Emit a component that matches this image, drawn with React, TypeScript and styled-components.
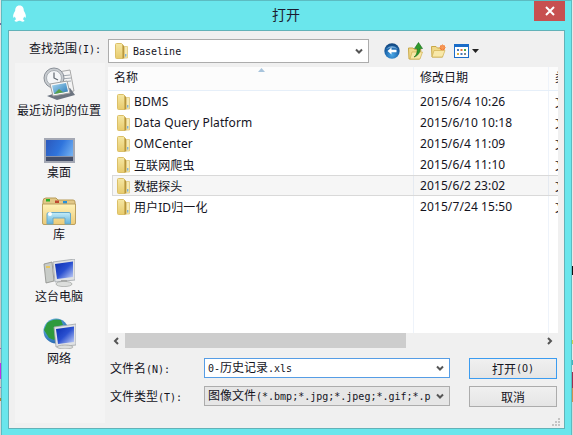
import React from 'react';
import styled, { createGlobalStyle } from 'styled-components';

const GlobalStyle = createGlobalStyle`
  html, body {
    margin: 0;
    width: 573px;
    height: 435px;
    overflow: hidden;
    background: #6ae6ec;
  }
  * { box-sizing: border-box; }
`;

const UI_FONT = `"Noto Sans", "Noto Sans CJK SC", sans-serif`;
const CJK_FONT = `"Noto Sans CJK SC", sans-serif`;

const Page = styled.div`
  display: flex;
  width: 573px;
  height: 435px;
  font-family: ${CJK_FONT};
  font-size: 12px;
  color: #14141e;
`;

const LeftEdge = styled.div`
  width: 1px;
  background: linear-gradient(
    #e4e4e4 0 23px, #7a6aa0 23px 25px, #e4e4e4 25px 110px, #c8c8c8 110px 348px,
    #b050c0 348px 349px, #c8c8c8 349px 363px, #c030e8 363px 379px, #c8c8c8 379px 387px,
    #a060c0 387px 388px, #c8c8c8 388px 398px, #b08030 398px 401px, #d8d8d8 401px
  );
`;

const RightEdge = styled.div`
  width: 1px;
  background: linear-gradient(
    #e8e8e8 0 266px, #101010 266px 275px, #e8e8e8 275px 340px, #c8d850 340px 344px,
    #e8e8e8 344px 360px, #40b8c0 360px 365px, #e8e8e8 365px 372px, #a03050 372px 388px,
    #d09050 388px 402px, #d8d8d8 402px
  );
`;

const Window = styled.div`
  position: relative;
  width: 571px;
  display: flex;
  flex-direction: column;
  padding: 0 6px 6px;
  background: #6ae6ec;
  border: 1px solid #5cbcc2;
  border-bottom: none;
`;

const TitleBar = styled.div`
  height: 29px;
  display: flex;
  align-items: center;
  justify-content: center;
  padding: 0 1px 4px 0;
  font-size: 14px;
  color: #1c1c30;
`;

const AppIcon = styled.svg`
  position: absolute;
  left: 10px;
  top: 4px;
`;

const CloseButton = styled.div`
  position: absolute;
  right: 6px;
  top: 0;
  width: 31px;
  height: 20px;
  display: flex;
  align-items: center;
  justify-content: center;
  background: #c75050;
`;

const Body = styled.div`
  position: relative;
  height: 399px;
  display: flex;
  flex-direction: column;
  background: #f0f0f0;
  border: 1px solid #62b2b8;
`;

const LookInRow = styled.div`
  display: flex;
  align-items: flex-start;
  height: 32px;
  padding: 8px 0 0 20px;
`;

const LookInLabel = styled.div`
  width: 79px;
  height: 20px;
  line-height: 17px;
  white-space: nowrap;
`;

const Latin = styled.span`
  font-family: "DejaVu Sans Mono", monospace;
  font-size: 10px;
`;

const Combo = styled.div<{ $width: number; $height: number; $filled?: boolean; $focus?: boolean }>`
  width: ${({ $width }) => $width}px;
  height: ${({ $height }) => $height}px;
  display: flex;
  align-items: center;
  flex: none;
  gap: 5px;
  padding: 0 5px 0 ${({ $filled, $focus }) => ($filled || $focus ? 3 : 6)}px;
  background: ${({ $filled }) => ($filled ? '#e6e6e6' : '#fff')};
  border: 1px solid ${({ $focus }) => ($focus ? '#569de5' : '#acacac')};
  white-space: nowrap;
  overflow: hidden;
`;

const ComboText = styled.span`
  flex: 1;
  overflow: hidden;
  line-height: 18px;
`;

const Toolbar = styled.div`
  display: flex;
  align-items: center;
  height: 23px;
  margin-left: 15px;
`;

const ToolIcon = styled.svg<{ $gap?: number }>`
  display: block;
  flex: none;
  margin-right: ${({ $gap }) => $gap ?? 0}px;
`;

const Split = styled.div`
  display: flex;
  height: 360px;
  padding-left: 6px;
`;

const Sidebar = styled.div`
  width: 90px;
  display: flex;
  flex-direction: column;
  padding: 3px 2px 0 0;
  background: #f4f4f4;
`;

const Place = styled.div`
  height: 62px;
  display: flex;
  flex-direction: column;
  align-items: center;
`;

const PlaceIcon = styled.div`
  height: 37px;
  display: flex;
  align-items: flex-end;
  justify-content: center;
  padding-bottom: 2px;
`;

const PlaceLabel = styled.div`
  height: 14px;
  line-height: 14px;
  white-space: nowrap;
`;

const MainColumn = styled.div`
  width: 450px;
  margin-left: 3px;
  padding-top: 4px;
  display: flex;
  flex-direction: column;
`;

const ListHeader = styled.div`
  position: relative;
  display: flex;
  height: 24px;
  background: #fcfcfc;
  border-bottom: 1px solid #e6eff9;
  font-family: ${UI_FONT};
  overflow: hidden;
`;

const HeaderCell = styled.div<{ $width: number }>`
  flex: none;
  width: ${({ $width }) => $width}px;
  padding-left: 6px;
  line-height: 22px;
  border-right: 1px solid #eef3fa;
  white-space: nowrap;
  overflow: hidden;
`;

const SortArrow = styled.svg`
  position: absolute;
  left: 150px;
  top: 1px;
`;

const ListBody = styled.div`
  height: 242px;
  background-color: #fff;
  background-image: linear-gradient(#eef3fa, #eef3fa), linear-gradient(#eef3fa, #eef3fa);
  background-repeat: no-repeat;
  background-size: 1px 100%;
  background-position: 305px 0, 440px 0;
  font-family: ${UI_FONT};
  letter-spacing: 0.1px;
`;

const Row = styled.div<{ $selected?: boolean }>`
  display: flex;
  align-items: center;
  height: 21px;
  margin-left: 4px;
  background: ${({ $selected }) => ($selected ? 'rgba(0, 0, 0, 0.035)' : 'transparent')};
  border: 1px solid ${({ $selected }) => ($selected ? '#d9d9d9' : 'transparent')};
  border-right: none;
`;

const NameCell = styled.div`
  width: 300px;
  display: flex;
  align-items: center;
  gap: 4px;
  padding-left: 4px;
  white-space: nowrap;
`;

const DateCell = styled.div`
  width: 135px;
  padding-left: 7px;
  white-space: nowrap;
`;

const TypeCell = styled.div`
  flex: 1;
  min-width: 0;
  padding-left: 7px;
  white-space: nowrap;
  overflow: hidden;
`;

const ScrollBar = styled.div`
  height: 15px;
  display: flex;
  align-items: center;
  background: #f0f0f0;
`;

const ScrollButton = styled.div`
  width: 17px;
  height: 15px;
  display: flex;
  align-items: center;
  justify-content: center;
`;

const ScrollThumb = styled.div`
  width: 281px;
  height: 15px;
  background: #cdcdcd;
`;

const ScrollTrack = styled.div`
  flex: 1;
`;

const Form = styled.div`
  display: flex;
  flex-direction: column;
  gap: 8px;
  padding-top: 10px;
`;

const FormRow = styled.div`
  display: flex;
  align-items: flex-start;
  height: 20px;
`;

const FormLabel = styled.div`
  width: 96px;
  padding-left: 2px;
  line-height: 20px;
  white-space: nowrap;
`;

const DialogButton = styled.div<{ $primary?: boolean }>`
  width: 88px;
  height: 21px;
  margin-left: 19px;
  flex: none;
  display: flex;
  align-items: center;
  justify-content: center;
  background: linear-gradient(#f0f0f0, #e5e5e5);
  border: 1px solid ${({ $primary }) => ($primary ? '#3c9cf0' : '#acacac')};
`;

const Grip = styled.svg`
  position: absolute;
  right: 3px;
  bottom: 1px;
`;

const Chevron = ({ dir = 'down' }: { dir?: 'down' | 'left' | 'right' }) => {
  const d =
    dir === 'down' ? 'M1 1.5 L4 4.5 L7 1.5' : dir === 'left' ? 'M5 1 L2 4 L5 7' : 'M2 1 L5 4 L2 7';
  const box = dir === 'down' ? [8, 6] : [7, 8];
  return (
    <ToolIcon width={box[0]} height={box[1]} viewBox={`0 0 ${box[0]} ${box[1]}`}>
      <path d={d} fill="none" stroke="#555" strokeWidth="2" />
    </ToolIcon>
  );
};

const Folder = () => (
  <ToolIcon width="13" height="16" viewBox="0 0 13 16">
    <defs>
      <linearGradient id="fold" x1="0" y1="0" x2="0" y2="1">
        <stop offset="0" stopColor="#f5e7a4" />
        <stop offset="1" stopColor="#e8cb6c" />
      </linearGradient>
    </defs>
    <path d="M0.5 1.5 Q0.5 0.5 1.5 0.5 H6.5 L8 2 V15.5 H1.5 Q0.5 15.5 0.5 14.5 Z" fill="url(#fold)" stroke="#dcc068" />
    <path d="M7.5 1.5 L9.5 3.5 V15.5 H7.5 Z" fill="#b8963c" />
    <path d="M9.5 3.5 H12.5 V15 H9.5 Z" fill="#f6eab4" stroke="#e0c878" strokeWidth="0.8" />
    <rect x="10" y="11" width="1.4" height="2.6" fill="#7fb2d8" />
  </ToolIcon>
);

const QQIcon = () => (
  <AppIcon width="15" height="18" viewBox="0 0 16 19">
    <path
      d="M8 0.5 C11.6 0.5 12.6 3.4 12.6 6 C13.8 8 15.4 10.8 14.6 13.2 C14 13.8 13.4 13 12.9 12.2 C12.7 13.4 12.2 14.4 11.6 15.1 C13 15.7 13.6 16.5 13 17.2 C12 18 9.6 17.8 8.6 16.8 H7.4 C6.4 17.8 4 18 3 17.2 C2.4 16.5 3 15.7 4.4 15.1 C3.8 14.4 3.3 13.4 3.1 12.2 C2.6 13 2 13.8 1.4 13.2 C0.6 10.8 2.2 8 3.4 6 C3.4 3.4 4.4 0.5 8 0.5 Z"
      fill="#fff"
    />
  </AppIcon>
);

const BackIcon = () => (
  <ToolIcon $gap={8} width="16" height="16" viewBox="0 0 16 16">
    <defs>
      <radialGradient id="back" cx="0.5" cy="0.75" r="0.8">
        <stop offset="0" stopColor="#4aa8e8" />
        <stop offset="0.6" stopColor="#1a62a8" />
        <stop offset="1" stopColor="#123e70" />
      </radialGradient>
    </defs>
    <circle cx="8" cy="8" r="7.7" fill="url(#back)" />
    <path d="M2 6 Q8 0 14 6 Q8 4 2 6 Z" fill="#8fc0e8" opacity="0.7" />
    <path d="M3.5 8 L7.5 4.5 V6.8 H12.5 V9.2 H7.5 V11.5 Z" fill="#fff" />
  </ToolIcon>
);

const UpIcon = () => (
  <ToolIcon $gap={8} width="15" height="18" viewBox="0 0 15 18">
    <path d="M0.5 6 H5 L6.5 7.5 H13 L11.5 17 H1 Z" fill="#f0d98a" stroke="#c8a848" />
    <path d="M2 17 L4 10 H14.5 L12 17 Z" fill="#f8e8a8" stroke="#d0b050" strokeWidth="0.7" />
    <path d="M6 15 C9 13 9.5 9 9 6.5 H6.5 L10.5 0.5 L14.5 6.5 H12 C12.4 10 10 14 6 15 Z" fill="#2e9a2a" stroke="#176a18" strokeWidth="0.6" />
  </ToolIcon>
);

const NewFolderIcon = () => (
  <ToolIcon $gap={8} width="15" height="14" viewBox="0 0 15 14">
    <path d="M0.5 2.5 H5 L6.5 4 H12 L11.5 13 H1 Z" fill="#f0d98a" stroke="#c8a848" />
    <path d="M1 13 L3 6.5 H14 L11.5 13 Z" fill="#f8e8a8" stroke="#d0b050" strokeWidth="0.7" />
    <circle cx="11.5" cy="3.5" r="2.6" fill="#f07830" />
    <path d="M11.5 0 V7 M8 3.5 H15 M9 1 L14 6 M14 1 L9 6" stroke="#f8a060" strokeWidth="0.7" />
  </ToolIcon>
);

const ViewIcon = () => (
  <ToolIcon $gap={3} width="15" height="14" viewBox="0 0 15 14">
    <rect x="0.5" y="0.5" width="14" height="13" fill="#fff" stroke="#1a6cc8" />
    <rect x="1" y="1" width="13" height="2" fill="#1a6cc8" />
    <rect x="3" y="5" width="2" height="2" fill="#4878b8" />
    <rect x="6.5" y="5" width="2" height="2" fill="#e07040" />
    <rect x="10" y="5" width="2" height="2" fill="#48a848" />
    <rect x="3" y="9" width="2" height="2" fill="#d8b040" />
    <rect x="6.5" y="9" width="2" height="2" fill="#4878b8" />
    <rect x="10" y="9" width="2" height="2" fill="#808890" />
  </ToolIcon>
);

const ViewCaret = () => (
  <ToolIcon width="7" height="4" viewBox="0 0 7 4">
    <path d="M0 0 H7 L3.5 4 Z" fill="#222" />
  </ToolIcon>
);

const RecentIcon = () => (
  <ToolIcon width="33" height="34" viewBox="0 0 33 34">
    <defs>
      <linearGradient id="recentPic" x1="0" y1="0" x2="1" y2="1">
        <stop offset="0" stopColor="#a8d8f0" />
        <stop offset="1" stopColor="#2878b8" />
      </linearGradient>
    </defs>
    <path d="M15 5 L27 3 L31 24 L16 26 Z" fill="#f4f4f4" stroke="#a8a8a8" />
    <path d="M18 9 L27 8 M18 12 L28 11 M18 15 L28 14" stroke="#a0a8b0" />
    <circle cx="11" cy="11" r="10" fill="#c8ccd0" stroke="#8a9098" />
    <circle cx="11" cy="11" r="7.5" fill="#f4f6f8" stroke="#a8aeb4" />
    <path d="M11 5.5 V11 L15 13" fill="none" stroke="#606870" strokeWidth="1.2" />
    <path d="M4 29 L27 21 L32 28 L14 33 Z" fill="#6c7480" />
    <path d="M7 17 L24 14 L27 26 L10 29 Z" fill="#f8f8f8" stroke="#a0a0a0" />
    <path d="M9 18.5 L23 16 L25 24.5 L11 27 Z" fill="url(#recentPic)" />
    <path d="M11 27 L16 22 L20 25 L25 24.5 Z" fill="#58a048" />
  </ToolIcon>
);

const DesktopIcon = () => (
  <ToolIcon width="31" height="25" viewBox="0 0 31 25">
    <defs>
      <linearGradient id="desk" x1="0" y1="0.2" x2="1" y2="0.6">
        <stop offset="0" stopColor="#2c5cc0" />
        <stop offset="0.5" stopColor="#2f74dc" />
        <stop offset="1" stopColor="#70aef0" />
      </linearGradient>
    </defs>
    <rect x="0" y="0" width="31" height="25" fill="#a4a8b4" />
    <rect x="2" y="2" width="27" height="21" fill="url(#desk)" />
    <rect x="2" y="18" width="27" height="5" fill="#444e68" />
    <rect x="2" y="18" width="27" height="1" fill="#8c94a8" />
  </ToolIcon>
);

const LibraryIcon = () => (
  <ToolIcon width="34" height="28" viewBox="0 0 34 28">
    <defs>
      <linearGradient id="lib" x1="0" y1="0" x2="0" y2="1">
        <stop offset="0" stopColor="#fff2b8" />
        <stop offset="1" stopColor="#eccb78" />
      </linearGradient>
      <linearGradient id="libDoor" x1="0" y1="0" x2="0" y2="1">
        <stop offset="0" stopColor="#c4ecf8" />
        <stop offset="1" stopColor="#60b0d8" />
      </linearGradient>
    </defs>
    <path d="M1 4 Q1 1 4 1 H14 L16 3 H31 Q33 3 33 5 V10 H1 Z" fill="#e2c888" stroke="#b89c58" />
    <rect x="4" y="2" width="4" height="2.5" fill="#28b028" />
    <rect x="13" y="3.5" width="4" height="2.5" fill="#c04830" />
    <rect x="21" y="4" width="4" height="2.5" fill="#2890d8" />
    <path d="M0.5 7 H33.5 V26 Q33.5 27.5 32 27.5 H2 Q0.5 27.5 0.5 26 Z" fill="url(#lib)" stroke="#bba060" />
    <path d="M5 27 V17 Q5 15.5 7 15.5 H27 Q28.5 15.5 28.5 17 V27 H23 V21 H11 V27 Z" fill="url(#libDoor)" stroke="#68a8c8" />
    <circle cx="8" cy="17" r="2" fill="#fff" />
  </ToolIcon>
);

const Monitor = ({ id }: { id: string }) => (
  <>
    <defs>
      <linearGradient id={id} x1="0" y1="0" x2="1" y2="1">
        <stop offset="0" stopColor="#0a2cb0" />
        <stop offset="0.5" stopColor="#2a50d0" />
        <stop offset="1" stopColor="#c8d4f8" />
      </linearGradient>
    </defs>
    <path d="M10 3 L32 0 V21 L12 23 Z" fill="#e0e2e4" stroke="#a0a4a8" strokeWidth="0.8" />
    <path d="M12 5 L30 2.5 V18 L14 20 Z" fill={`url(#${id})`} />
  </>
);

const ComputerIcon = () => (
  <ToolIcon width="32" height="28" viewBox="0 0 32 28">
    <path d="M1 5 L9 3 L11 22 L3 24 Z" fill="#c8ccc8" stroke="#8a8c88" strokeWidth="0.8" />
    <rect x="3" y="7" width="4" height="2" fill="#e8c860" />
    <Monitor id="pcScreen" />
    <path d="M18 21 H24 V23 H18 Z" fill="#a8aaa8" />
    <ellipse cx="21" cy="25" rx="8" ry="2.6" fill="#dcdedc" stroke="#a0a4a0" strokeWidth="0.7" />
  </ToolIcon>
);

const NetworkIcon = () => (
  <ToolIcon width="33" height="31" viewBox="0 0 33 31">
    <defs>
      <radialGradient id="globe" cx="0.35" cy="0.3" r="0.8">
        <stop offset="0" stopColor="#78c8f0" />
        <stop offset="1" stopColor="#1c5ca8" />
      </radialGradient>
    </defs>
    <circle cx="13" cy="13" r="12.5" fill="url(#globe)" />
    <path d="M4 5 Q10 0 18 2 L20 7 L13 9 L12 14 L16 18 L11 22 L6 20 L1 12 Z" fill="#2f9a3c" />
    <path d="M19 16 L24 18 L19 24 Z" fill="#2f9a3c" />
    <g transform="translate(1 6)">
      <Monitor id="netScreen" />
      <path d="M18 21 H24 V22.5 H18 Z" fill="#a8aaa8" />
      <ellipse cx="21" cy="23" rx="8" ry="2" fill="#dcdedc" stroke="#a0a4a0" strokeWidth="0.7" />
    </g>
  </ToolIcon>
);

const places = [
  { label: '最近访问的位置', icon: <RecentIcon /> },
  { label: '桌面', icon: <DesktopIcon /> },
  { label: '库', icon: <LibraryIcon /> },
  { label: '这台电脑', icon: <ComputerIcon /> },
  { label: '网络', icon: <NetworkIcon /> },
];

const files = [
  { name: 'BDMS', date: '2015/6/4 10:26' },
  { name: 'Data Query Platform', date: '2015/6/10 10:18' },
  { name: 'OMCenter', date: '2015/6/4 11:09' },
  { name: '互联网爬虫', date: '2015/6/4 11:10' },
  { name: '数据探头', date: '2015/6/2 23:02', selected: true },
  { name: '用户ID归一化', date: '2015/7/24 15:50' },
];

export default function App() {
  return (
    <Page>
      <GlobalStyle />
      <LeftEdge />
      <Window>
        <QQIcon />
        <TitleBar>打开</TitleBar>
        <CloseButton>
          <svg width="10" height="10" viewBox="0 0 10 10">
            <path d="M1 1 L9 9 M9 1 L1 9" stroke="#fff" strokeWidth="2" />
          </svg>
        </CloseButton>
        <Body>
          <LookInRow>
            <LookInLabel>
              查找范围<Latin>(I):</Latin>
            </LookInLabel>
            <Combo $width={261} $height={24}>
              <Folder />
              <ComboText>
                <Latin>Baseline</Latin>
              </ComboText>
              <Chevron />
            </Combo>
            <Toolbar>
              <BackIcon />
              <UpIcon />
              <NewFolderIcon />
              <ViewIcon />
              <ViewCaret />
            </Toolbar>
          </LookInRow>
          <Split>
            <Sidebar>
              {places.map((place) => (
                <Place key={place.label}>
                  <PlaceIcon>{place.icon}</PlaceIcon>
                  <PlaceLabel>{place.label}</PlaceLabel>
                </Place>
              ))}
            </Sidebar>
            <MainColumn>
              <ListHeader>
                <HeaderCell $width={306}>名称</HeaderCell>
                <HeaderCell $width={135}>修改日期</HeaderCell>
                <HeaderCell $width={60}>类型</HeaderCell>
                <SortArrow width="7" height="4" viewBox="0 0 7 4">
                  <path d="M3.5 0 L7 4 H0 Z" fill="#a8c4dc" />
                </SortArrow>
              </ListHeader>
              <ListBody>
                {files.map((file) => (
                  <Row key={file.name} $selected={file.selected}>
                    <NameCell>
                      <Folder />
                      {file.name}
                    </NameCell>
                    <DateCell>{file.date}</DateCell>
                    <TypeCell>文件夹</TypeCell>
                  </Row>
                ))}
              </ListBody>
              <ScrollBar>
                <ScrollButton>
                  <Chevron dir="left" />
                </ScrollButton>
                <ScrollThumb />
                <ScrollTrack />
                <ScrollButton>
                  <Chevron dir="right" />
                </ScrollButton>
              </ScrollBar>
              <Form>
                <FormRow>
                  <FormLabel>
                    文件名<Latin>(N):</Latin>
                  </FormLabel>
                  <Combo $width={246} $height={20} $focus>
                    <ComboText>
                      <Latin>0-</Latin>历史记录<Latin>.xls</Latin>
                    </ComboText>
                    <Chevron />
                  </Combo>
                  <DialogButton $primary>
                    打开<Latin>(O)</Latin>
                  </DialogButton>
                </FormRow>
                <FormRow>
                  <FormLabel>
                    文件类型<Latin>(T):</Latin>
                  </FormLabel>
                  <Combo $width={246} $height={20} $filled>
                    <ComboText>
                      图像文件<Latin>(*.bmp;*.jpg;*.jpeg;*.gif;*.p</Latin>
                    </ComboText>
                    <Chevron />
                  </Combo>
                  <DialogButton>取消</DialogButton>
                </FormRow>
              </Form>
            </MainColumn>
          </Split>
          <Grip width="9" height="9" viewBox="0 0 9 9">
            <path d="M6 0 h2 v2 h-2 Z M3 3 h2 v2 h-2 Z M6 3 h2 v2 h-2 Z M0 6 h2 v2 h-2 Z M3 6 h2 v2 h-2 Z M6 6 h2 v2 h-2 Z" fill="#c4c4c4" />
          </Grip>
        </Body>
      </Window>
      <RightEdge />
    </Page>
  );
}
